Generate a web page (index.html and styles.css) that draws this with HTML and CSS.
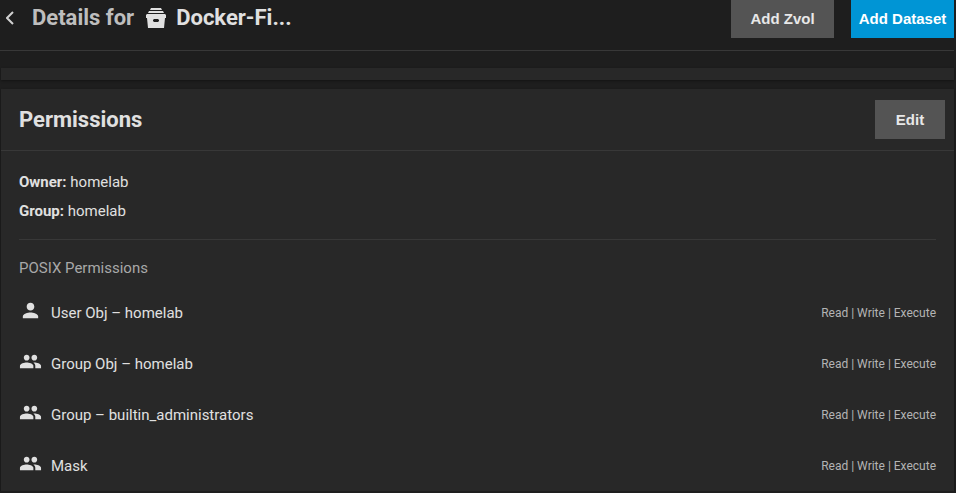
FILE: index.html
```html
<!DOCTYPE html>
<html lang="en">
<head>
<meta charset="utf-8">
<title>Dataset details</title>
<link rel="stylesheet" href="styles.css">
</head>
<body>
<svg class="defs" aria-hidden="true">
  <symbol id="person" viewBox="0 0 24 24"><path d="M12 12c2.21 0 4-1.79 4-4s-1.790-4-4-4-4 1.790-4 4 1.790 4 4 4zm0 2c-2.670 0-8 1.340-8 4v2h16v-2c0-2.660-5.330-4-8-4z"/></symbol>
  <symbol id="people" viewBox="0 0 24 24"><path d="M16 11c1.660 0 2.990-1.340 2.990-3S17.660 5 16 5s-3 1.340-3 3 1.340 3 3 3zm-8 0c1.660 0 2.990-1.340 2.990-3S9.660 5 8 5 5 6.340 5 8s1.340 3 3 3zm0 2c-2.330 0-7 1.170-7 3.500V19h14v-2.500c0-2.330-4.670-3.500-7-3.500zm8 0c-.29 0-.62.020-.97.050 1.160.84 1.970 1.970 1.970 3.450V19h6v-2.500c0-2.330-4.670-3.500-7-3.500z"/></symbol>
</svg>
<header class="page-header">
  <button class="back" type="button" aria-label="Back"><svg viewBox="0 0 8 14"><path d="M7 1L1 7l6 6"/></svg></button>
  <h1 class="title">
    <span class="title-prefix">Details for</span>
    <svg class="title-icon" viewBox="0 0 20 20" aria-hidden="true"><path d="M5 0h10l1 2H4zM3 3h14l1 2H2zM1 6h18l1 1v3h-1l-1 10H2L1 10H0V7zM8 11l-1 1v1l1 1h4l1-1v-1l-1-1z" fill-rule="evenodd"/></svg>
    <span class="title-name">Docker-Fi...</span>
  </h1>
  <div class="actions">
    <button class="btn" type="button">Add Zvol</button>
    <button class="btn btn-primary" type="button">Add Dataset</button>
  </div>
</header>
<main class="cards">
  <section class="card card-collapsed"></section>
  <section class="card">
    <div class="card-header">
      <h2>Permissions</h2>
      <button class="btn btn-edit" type="button">Edit</button>
    </div>
    <div class="card-body">
      <div class="owners">
        <p><strong>Owner:</strong> homelab</p>
        <p><strong>Group:</strong> homelab</p>
      </div>
      <h3>POSIX Permissions</h3>
      <ul class="entries">
        <li><svg class="icon"><use href="#person"/></svg><span>User Obj – homelab</span><span class="access">Read | Write | Execute</span></li>
        <li><svg class="icon"><use href="#people"/></svg><span>Group Obj – homelab</span><span class="access">Read | Write | Execute</span></li>
        <li><svg class="icon"><use href="#people"/></svg><span>Group – builtin_administrators</span><span class="access">Read | Write | Execute</span></li>
        <li><svg class="icon"><use href="#people"/></svg><span>Mask</span><span class="access">Read | Write | Execute</span></li>
      </ul>
    </div>
  </section>
</main>
</body>
</html>
```
FILE: styles.css
```css
* { box-sizing: border-box; }
body {
  margin: 0;
  padding-right: 2px;
  background: #1e1e1e;
  color: #e0e0e0;
  font: 15px/20px Roboto, sans-serif;
}
h1, h2, h3, p, ul { margin: 0; padding: 0; }
.defs { display: none; }
svg { fill: currentColor; }
.page-header {
  display: flex;
  align-items: flex-start;
  height: 51px;
  border-bottom: 1px solid #383838;
}
.back {
  width: 32px;
  height: 36px;
  padding: 0 0 0 6px;
  border: 0;
  background: none;
  color: #d0d0d0;
  text-align: left;
}
.back svg {
  display: block;
  width: 8px;
  height: 14px;
  fill: none;
  stroke: currentColor;
  stroke-width: 2;
}
.title {
  display: flex;
  align-items: center;
  height: 36px;
  font-size: 22px;
  font-weight: 700;
}
.title-prefix { color: #bebebe; }
.title-icon {
  width: 20px;
  height: 20px;
  margin: 0 10px 0 12px;
}
.actions {
  display: flex;
  gap: 17px;
  margin-left: auto;
}
.btn {
  width: 103px;
  height: 38px;
  padding: 0;
  border: 0;
  background: #545454;
  color: #e8e8e8;
  font: 700 15px/20px "Liberation Sans", sans-serif;
}
.btn-primary { background: #0095d5; color: #fff; }
.btn-edit { width: 70px; height: 39px; }
.cards {
  display: grid;
  gap: 9px;
  padding: 17px 0 0 1px;
}
.card {
  background: #282828;
  box-shadow: 0 1px 2px #141414;
}
.card-collapsed { height: 12px; }
.card-header {
  display: flex;
  align-items: center;
  justify-content: space-between;
  height: 62px;
  padding: 0 9px 0 18px;
  border-bottom: 1px solid #383838;
}
h2 { font-size: 22px; font-weight: 700; }
.card-body { padding: 17px 18px 0; }
.owners {
  padding-bottom: 13px;
  border-bottom: 1px solid #383838;
  line-height: 29px;
}
h3 {
  margin: 18px 0 9px;
  color: #a8a8a8;
  font-size: 15px;
  font-weight: 400;
}
.entries { list-style: none; }
.entries li {
  display: flex;
  align-items: center;
  height: 51px;
}
.icon {
  width: 23px;
  height: 23px;
  margin: 0 9px 4px 0;
}
.access {
  margin-left: auto;
  color: #b4b4b4;
  font-size: 12px;
}
```
